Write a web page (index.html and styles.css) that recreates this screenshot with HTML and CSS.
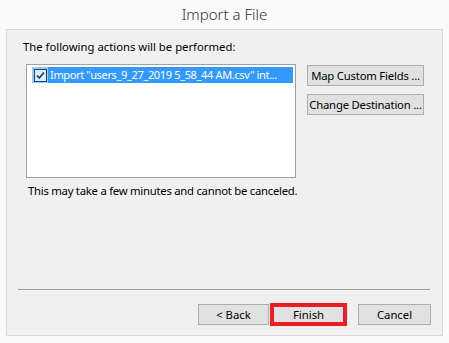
FILE: index.html
```html
<!DOCTYPE html>
<html lang="en">
<head>
    <meta charset="UTF-8">
    <title>Import a File</title>
    <link rel="stylesheet" href="styles.css">
</head>
<body>
    <div class="title">Import a File</div>

    <div class="panel">
        <p class="label">The following actions will be performed:</p>

        <div class="main">
            <div class="listbox">
                <div class="row">
                    <span class="check">
                        <svg width="13" height="13" viewBox="0 0 13 13">
                            <rect x="0.5" y="0.5" width="12" height="12" fill="#dcecfc" stroke="#1c3f6e"/>
                            <path d="M3 6.5 L5.3 9 L10 3.5" fill="none" stroke="#1c3f6e" stroke-width="1.8"/>
                        </svg>
                    </span>
                    <span class="item">Import "users_9_27_2019 5_58_44 AM.csv" int...</span>
                </div>
            </div>

            <div class="side-buttons">
                <button class="btn wide">Map Custom Fields ...</button>
                <button class="btn wide">Change Destination ...</button>
            </div>
        </div>

        <p class="note">This may take a few minutes and cannot be canceled.</p>

        <div class="separator"></div>

        <div class="footer">
            <button class="btn back">&lt; Back</button>
            <div class="highlight">
                <button class="btn finish">Finish</button>
            </div>
            <button class="btn cancel">Cancel</button>
        </div>
    </div>
</body>
</html>
```

FILE: styles.css
```css
/* Reset */
* {
    margin: 0;
    padding: 0;
    box-sizing: border-box;
    font-family: 'Noto Sans', sans-serif;
}

body {
    background: #fafafa;
    color: #000;
    font-size: 11.3px;
}

/* Dialog title */
.title {
    height: 29px;
    line-height: 29px;
    text-align: center;
    font-size: 15px;
    font-weight: 300;
    color: #333;
}

/* Gray content panel */
.panel {
    margin: 0 6px;
    height: 307px;
    background: #f0f0f0;
    border: 1px solid #d9d9d9;
}

.label {
    margin: 9px 0 0 16px;
    line-height: 16px;
}

.main {
    display: flex;
    margin: 9px 0 0 19px;
    gap: 11px;
}

/* List of actions */
.listbox {
    width: 270px;
    height: 114px;
    background: #fff;
    border: 1px solid #a0a0a0;
    padding: 2px 2px 0 5px;
}

.row {
    display: flex;
    height: 16px;
}

.check {
    width: 16px;
    height: 16px;
    background: #99c9f5;
    display: flex;
    align-items: center;
    justify-content: center;
}

.item {
    flex: 1;
    background: #3399ff;
    color: #fff;
    font-size: 11px;
    letter-spacing: -0.35px;
    line-height: 16px;
    padding-left: 2px;
    white-space: nowrap;
    overflow: hidden;
}

.side-buttons {
    display: flex;
    flex-direction: column;
    gap: 8px;
    padding-top: 1px;
}

/* Buttons */
.btn {
    background: #e1e1e1;
    border: 1px solid #adadad;
    font-size: 11.3px;
    color: #000;
    height: 21px;
    line-height: 19px;
    padding: 0;
    white-space: nowrap;
}

.wide {
    width: 117px;
    letter-spacing: -0.2px;
}

.note {
    margin: 5px 0 0 21px;
    line-height: 16px;
    letter-spacing: -0.25px;
}

.separator {
    margin: 90px 12px 0 11px;
    height: 1px;
    background: #a0a0a0;
}

.footer {
    display: flex;
    align-items: center;
    justify-content: flex-end;
    margin-top: 13px;
    padding-right: 11px;
}

.back {
    width: 71px;
}

/* Red marker around Finish */
.highlight {
    margin-left: 1px;
    border: 4px solid #ed1c24;
}

.finish {
    display: block;
    width: 69px;
    height: 15px;
    line-height: 13px;
    border: none;
}

.cancel {
    width: 73px;
    margin-left: 11px;
}
```
